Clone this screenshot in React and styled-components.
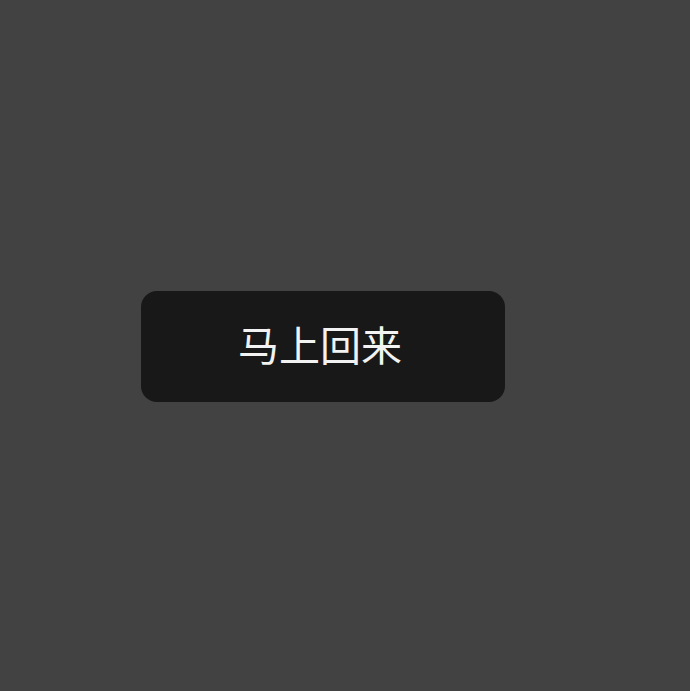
import React from "react";
import styled, { createGlobalStyle } from "styled-components";

const GlobalStyle = createGlobalStyle`
  html, body {
    margin: 0;
    padding: 0;
    background: #424242;
  }
`;

const Page = styled.div`
  width: 690px;
  height: 691px;
  box-sizing: border-box;
  padding: 291px 0 0 141px;
  background: #424242;
`;

const Toast = styled.div`
  width: 364px;
  height: 111px;
  box-sizing: border-box;
  padding: 0 6px 6px 0;
  border-radius: 16px;
  background: #181818;
  display: flex;
  align-items: center;
  justify-content: center;
  color: #f2f2f2;
  font-family: "Noto Sans CJK SC", "Noto Sans", sans-serif;
  font-size: 41px;
  font-weight: 400;
  line-height: 1;
`;

const App = () => (
  <>
    <GlobalStyle />
    <Page>
      <Toast>马上回来</Toast>
    </Page>
  </>
);

export default App;
